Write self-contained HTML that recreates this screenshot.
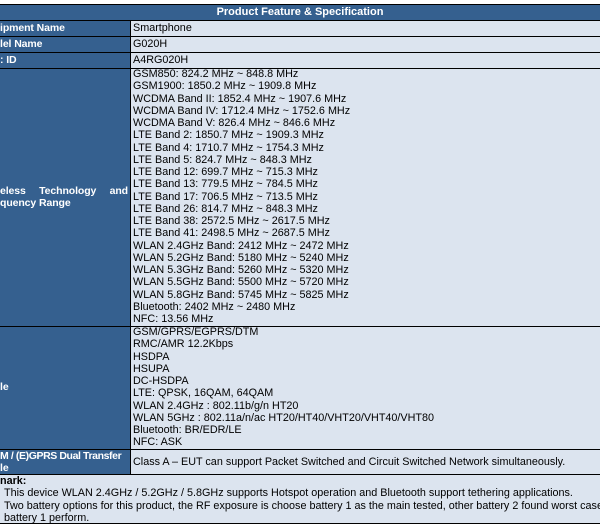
<!DOCTYPE html><html><head><style>
body{margin:0;width:600px;height:529px;background:#fff;position:relative;overflow:hidden;font-family:"Liberation Sans",Arial,sans-serif;font-size:10.8px;color:#000}
.a{position:absolute}
.d{background:#35608f;color:#fff;font-weight:bold}
.l{background:#dce4ef}
.h{background:#000}
.t{position:absolute;left:133px;line-height:12.25px;white-space:nowrap}
.k{position:absolute;white-space:nowrap;color:#fff;font-weight:bold;font-size:10.5px;letter-spacing:-0.1px}
</style></head><body>
<div class="a d" style="left:0;top:4px;width:600px;height:17px"></div>
<div class="a" style="left:0;top:5px;width:600px;text-align:center;color:#fff;font-weight:bold;font-size:11px;line-height:15px">Product Feature &amp; Specification</div>
<div class="a d" style="left:0;top:21px;width:130px;height:453px"></div>
<div class="a l" style="left:131px;top:21px;width:469px;height:453px"></div>
<div class="a l" style="left:0;top:474px;width:600px;height:50px"></div>
<div class="a h" style="left:0;top:4px;width:600px;height:1px"></div>
<div class="a h" style="left:0;top:20px;width:600px;height:1px"></div>
<div class="a h" style="left:0;top:36px;width:600px;height:1px"></div>
<div class="a h" style="left:0;top:52px;width:600px;height:1px"></div>
<div class="a h" style="left:0;top:68px;width:600px;height:1px"></div>
<div class="a h" style="left:0;top:326px;width:600px;height:1px"></div>
<div class="a h" style="left:0;top:449px;width:600px;height:1px"></div>
<div class="a h" style="left:0;top:474px;width:600px;height:1px"></div>
<div class="a h" style="left:0;top:523px;width:600px;height:1px"></div>
<div class="a h" style="left:130px;top:20px;width:1px;height:454px"></div>
<div class="k" style="left:0;top:22px">ipment Name</div>
<div class="k" style="left:0;top:38px">lel Name</div>
<div class="k" style="left:0;top:54px">: ID</div>
<div class="k" style="left:0;top:185px;width:128px;display:flex;justify-content:space-between"><span>eless</span><span>Technology</span><span>and</span></div>
<div class="k" style="left:0;top:197px">quency Range</div>
<div class="k" style="left:0;top:381px">le</div>
<div class="k" style="left:0;top:450px;letter-spacing:-0.4px">M / (E)GPRS Dual Transfer</div>
<div class="k" style="left:0;top:462px">le</div>
<div class="t" style="top:22px">Smartphone</div>
<div class="t" style="top:38px">G020H</div>
<div class="t" style="top:54px">A4RG020H</div>
<div class="t" style="top:68px">GSM850: 824.2 MHz ~ 848.8 MHz<br>GSM1900: 1850.2 MHz ~ 1909.8 MHz<br>WCDMA Band II: 1852.4 MHz ~ 1907.6 MHz<br>WCDMA Band IV: 1712.4 MHz ~ 1752.6 MHz<br>WCDMA Band V: 826.4 MHz ~ 846.6 MHz<br>LTE Band 2: 1850.7 MHz ~ 1909.3 MHz<br>LTE Band 4: 1710.7 MHz ~ 1754.3 MHz<br>LTE Band 5: 824.7 MHz ~ 848.3 MHz<br>LTE Band 12: 699.7 MHz ~ 715.3 MHz<br>LTE Band 13: 779.5 MHz ~ 784.5 MHz<br>LTE Band 17: 706.5 MHz ~ 713.5 MHz<br>LTE Band 26: 814.7 MHz ~ 848.3 MHz<br>LTE Band 38: 2572.5 MHz ~ 2617.5 MHz<br>LTE Band 41: 2498.5 MHz ~ 2687.5 MHz<br>WLAN 2.4GHz Band: 2412 MHz ~ 2472 MHz<br>WLAN 5.2GHz Band: 5180 MHz ~ 5240 MHz<br>WLAN 5.3GHz Band: 5260 MHz ~ 5320 MHz<br>WLAN 5.5GHz Band: 5500 MHz ~ 5720 MHz<br>WLAN 5.8GHz Band: 5745 MHz ~ 5825 MHz<br>Bluetooth: 2402 MHz ~ 2480 MHz<br>NFC: 13.56 MHz</div>
<div class="t" style="top:326px">GSM/GPRS/EGPRS/DTM<br>RMC/AMR 12.2Kbps<br>HSDPA<br>HSUPA<br>DC-HSDPA<br>LTE: QPSK, 16QAM, 64QAM<br>WLAN 2.4GHz : 802.11b/g/n HT20<br>WLAN 5GHz : 802.11a/n/ac HT20/HT40/VHT20/VHT40/VHT80<br>Bluetooth: BR/EDR/LE<br>NFC: ASK</div>
<div class="t" style="top:456px">Class A – EUT can support Packet Switched and Circuit Switched Network simultaneously.</div>
<div class="a" style="left:0;top:475px;font-weight:bold;line-height:12px">nark:</div>
<div class="a" style="left:4px;top:487px;line-height:12.5px;white-space:nowrap">This device WLAN 2.4GHz / 5.2GHz / 5.8GHz supports Hotspot operation and Bluetooth support tethering applications.<br>Two battery options for this product, the RF exposure is choose battery 1 as the main tested, other battery 2 found worst case f<br>battery 1 perform.</div>
</body></html>
